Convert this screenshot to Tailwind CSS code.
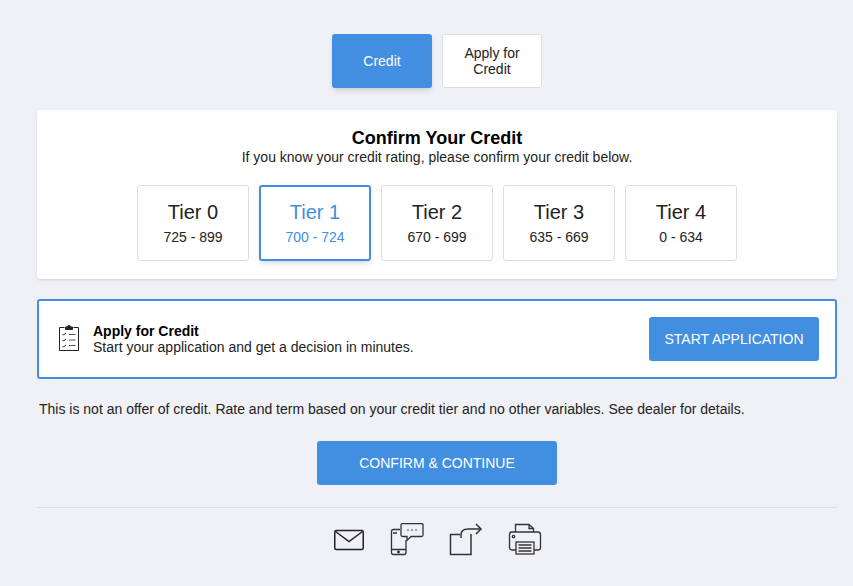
<!DOCTYPE html>
<html lang="en">
<head>
<meta charset="UTF-8">
<title>Confirm Your Credit</title>
<script src="https://cdn.jsdelivr.net/npm/@tailwindcss/browser@4"></script>
</head>
<body class="bg-[#f0f1f7] text-[#222] font-['Liberation_Sans',Arial,sans-serif] overflow-hidden">
<main class="w-[800px] ml-[37px] pt-[34px]">
    <div class="flex justify-center gap-[10px]">
        <button class="w-[100px] h-[54px] rounded-[3px] bg-[#428ee0] text-white text-sm shadow-md">Credit</button>
        <button class="w-[100px] h-[54px] rounded-[3px] bg-white border border-[#dcdde3] text-sm leading-4 px-4">Apply for Credit</button>
    </div>

    <section class="mt-[22px] h-[169px] bg-white rounded-[3px] shadow-sm pt-[18px] text-center">
        <h2 class="text-lg leading-5 font-bold text-black">Confirm Your Credit</h2>
        <p class="text-sm leading-[17px] mt-[1px]">If you know your credit rating, please confirm your credit below.</p>
        <div class="flex justify-center gap-[10px] mt-[19px]">
            <div class="w-[112px] h-[76px] rounded-[3px] border border-[#dddddd] pt-[14px]">
                <div class="text-xl leading-6">Tier 0</div>
                <div class="text-sm leading-4 mt-[5px]">725 - 899</div>
            </div>
            <div class="w-[112px] h-[76px] rounded-[3px] border-2 border-[#428ee0] pt-[13px] text-[#428ee0] shadow-md">
                <div class="text-xl leading-6">Tier 1</div>
                <div class="text-sm leading-4 mt-[5px]">700 - 724</div>
            </div>
            <div class="w-[112px] h-[76px] rounded-[3px] border border-[#dddddd] pt-[14px]">
                <div class="text-xl leading-6">Tier 2</div>
                <div class="text-sm leading-4 mt-[5px]">670 - 699</div>
            </div>
            <div class="w-[112px] h-[76px] rounded-[3px] border border-[#dddddd] pt-[14px]">
                <div class="text-xl leading-6">Tier 3</div>
                <div class="text-sm leading-4 mt-[5px]">635 - 669</div>
            </div>
            <div class="w-[112px] h-[76px] rounded-[3px] border border-[#dddddd] pt-[14px]">
                <div class="text-xl leading-6">Tier 4</div>
                <div class="text-sm leading-4 mt-[5px]">0 - 634</div>
            </div>
        </div>
    </section>

    <section class="mt-[20px] h-[80px] bg-white border-2 border-[#428ee0] rounded-[3px] flex items-center pl-[19px] pr-[16px]">
        <svg width="22" height="28" viewBox="0 0 22 28" fill="none" stroke="#222" stroke-width="1" class="shrink-0">
            <path d="M6.500 2.500H1.500V25.500H20.500V2.500H15.500"/>
            <path d="M7.500 4.500V2H9.500C9.500 -0.500 12.500 -0.500 12.500 2H14.500V4.500Z" fill="#222"/>
            <path d="M4.500 9l1 1L8 8M4.500 15l1 1L8 14M4.500 21l1 1L8 20"/>
            <path d="M11 9.500H17.500M11 15H17.500M11 20.500H17.500" stroke="#555"/>
        </svg>
        <div class="ml-[13px] text-sm leading-4">
            <div class="font-bold text-black">Apply for Credit</div>
            <div>Start your application and get a decision in minutes.</div>
        </div>
        <button class="ml-auto w-[170px] h-[44px] rounded-[3px] bg-[#428ee0] text-white text-sm">START APPLICATION</button>
    </section>

    <p class="mt-[22px] ml-[2px] text-sm leading-4">This is not an offer of credit. Rate and term based on your credit tier and no other variables. See dealer for details.</p>

    <div class="flex justify-center mt-[24px]">
        <button class="w-[240px] h-[44px] rounded-[3px] bg-[#428ee0] text-white text-sm">CONFIRM &amp; CONTINUE</button>
    </div>

    <div class="mt-[22px] border-t border-[#dcdde3] flex justify-center items-start gap-[25px] pt-[15px]">
        <svg width="32" height="24" viewBox="0 0 32 24" fill="none" stroke="#222" stroke-width="1.500" class="mt-[6px]">
            <rect x="2.750" y="1.500" width="28.500" height="19" rx="1.500"/>
            <path d="M3.500 2.500L17 12.500L30.500 2.500"/>
        </svg>
        <svg width="34" height="34" viewBox="0 0 34 34" fill="none" stroke="#333" stroke-width="1.300" class="ml-[1px]">
            <path d="M10 6.500H3.500Q1.500 6.500 1.500 8.500V29.500Q1.500 31.500 3.500 31.500H14Q16 31.500 16 29.500V17"/>
            <path d="M1.500 26.500H16M3 10H7"/>
            <circle cx="8.500" cy="29" r="0.800" fill="#333"/>
            <path d="M12.500 0.500H31.500Q33 0.500 33 2V12Q33 13.500 31.500 13.500H21L17 17.500V13.500H12.500Q11 13.500 11 12V2Q11 0.500 12.500 0.500Z"/>
            <path d="M17 7H19M21 7H23M25 7H27" stroke="#888"/>
        </svg>
        <svg width="34" height="34" viewBox="0 0 34 34" fill="none" stroke="#333" stroke-width="1.500">
            <path d="M11 11.500H1.500V31.500H22V11"/>
            <path d="M12 15V12Q12 6 19 6H31"/>
            <path d="M27 1L32 6L27 11"/>
        </svg>
        <svg width="34" height="32" viewBox="0 0 34 32" fill="none" stroke="#333" stroke-width="1.300">
            <path d="M7.500 9V1.500H21L25.500 5.500V9"/>
            <path d="M21 1.500V5.500H25.500"/>
            <path d="M8 27H4Q1.500 27 1.500 24.500V11.500Q1.500 9 4 9H30Q32.500 9 32.500 11.500V24.500Q32.500 27 30 27H26"/>
            <circle cx="5.500" cy="13.500" r="1.200"/>
            <rect x="8" y="19" width="18" height="12" fill="#f0f1f7"/>
            <path d="M10.500 22H23.500M10.500 25H23.500M10.500 28H23.500"/>
        </svg>
    </div>
</main>
</body>
</html>
